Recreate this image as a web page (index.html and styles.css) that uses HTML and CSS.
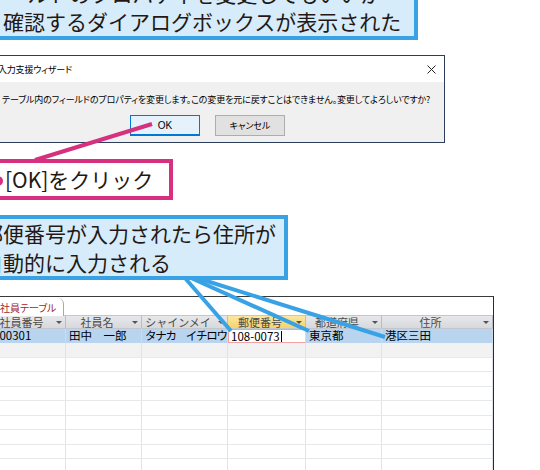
FILE: index.html
```html
<!DOCTYPE html>
<html lang="ja">
<head>
<meta charset="utf-8">
<title>入力支援ウィザード</title>
<link rel="stylesheet" href="styles.css">
</head>
<body>
<div class="page">
  <div class="note note-top">
    <div class="note-line l1">フィールドのプロパティを変更してもいいか</div>
    <div class="note-line l2">確認するダイアログボックスが表示された</div>
  </div>

  <div class="dialog">
    <div class="dlg-title">
      <span class="dlg-title-text">入力支援ウィザード</span>
      <svg class="dlg-close" width="9" height="9" viewBox="0 0 9 9"><path d="M0.5 0.5 L8.5 8.5 M8.5 0.5 L0.5 8.5" stroke="#222" stroke-width="1" fill="none"/></svg>
    </div>
    <div class="dlg-body">
      <p class="dlg-msg">テーブル内のフィールドのプロパティを変更します。この変更を元に戻すことはできません。変更してよろしいですか?</p>
      <div class="dlg-btns">
        <span class="btn btn-ok">OK</span>
        <span class="btn btn-cancel">キャンセル</span>
      </div>
    </div>
  </div>

  <div class="click-note"><span class="bullet"></span>[OK]をクリック</div>

  <div class="note note-mid">
    <div class="note-line">郵便番号が入力されたら住所が</div>
    <div class="note-line">自動的に入力される</div>
  </div>

  <div class="sheet">
    <div class="tabs"><span class="tab">社員テーブル</span></div>
    <div class="grid head">
      <div class="hcell"><span class="hlabel">社員番号</span><span class="arrow"></span></div>
      <div class="hcell"><span class="hlabel">社員名</span><span class="arrow"></span></div>
      <div class="hcell"><span class="hlabel">シャインメイ</span><span class="arrow"></span></div>
      <div class="hcell active"><span class="hlabel">郵便番号</span><span class="arrow"></span></div>
      <div class="hcell"><span class="hlabel">都道府県</span><span class="arrow"></span></div>
      <div class="hcell"><span class="hlabel">住所</span><span class="arrow"></span></div>
    </div>
    <div class="grid row selected">
      <div class="cell">100301</div>
      <div class="cell">田中　一郎</div>
      <div class="cell kana">タナカ　イチロウ</div>
      <div class="cell editing">108-0073<span class="caret"></span></div>
      <div class="cell">東京都</div>
      <div class="cell">港区三田</div>
    </div>
    <div class="grid row newrow"><div class="cell"></div><div class="cell"></div><div class="cell"></div><div class="cell"></div><div class="cell"></div><div class="cell"></div></div>
    <div class="grid row"><div class="cell"></div><div class="cell"></div><div class="cell"></div><div class="cell"></div><div class="cell"></div><div class="cell"></div></div>
    <div class="grid row"><div class="cell"></div><div class="cell"></div><div class="cell"></div><div class="cell"></div><div class="cell"></div><div class="cell"></div></div>
    <div class="grid row"><div class="cell"></div><div class="cell"></div><div class="cell"></div><div class="cell"></div><div class="cell"></div><div class="cell"></div></div>
    <div class="grid row"><div class="cell"></div><div class="cell"></div><div class="cell"></div><div class="cell"></div><div class="cell"></div><div class="cell"></div></div>
    <div class="grid row"><div class="cell"></div><div class="cell"></div><div class="cell"></div><div class="cell"></div><div class="cell"></div><div class="cell"></div></div>
    <div class="grid row"><div class="cell"></div><div class="cell"></div><div class="cell"></div><div class="cell"></div><div class="cell"></div><div class="cell"></div></div>
    <div class="grid row"><div class="cell"></div><div class="cell"></div><div class="cell"></div><div class="cell"></div><div class="cell"></div><div class="cell"></div></div>
    <div class="grid row"><div class="cell"></div><div class="cell"></div><div class="cell"></div><div class="cell"></div><div class="cell"></div><div class="cell"></div></div>
  </div>

  <svg class="overlay" width="540" height="470" viewBox="0 0 540 470">
    <line x1="35" y1="160" x2="152" y2="124" stroke="#d6307e" stroke-width="4"/>
    <g stroke="#39a2e4" stroke-width="4">
      <line x1="185" y1="278" x2="231" y2="331"/>
      <line x1="191" y1="278" x2="309" y2="331"/>
      <line x1="197" y1="278" x2="385" y2="337"/>
    </g>
  </svg>
</div>
</body>
</html>
```

FILE: styles.css
```css
* { box-sizing: border-box; margin: 0; padding: 0; }
html, body { width: 540px; height: 470px; overflow: hidden; background: #fff; }
body { font-family: "Noto Sans CJK JP", "Noto Sans", sans-serif; color: #231815; }

.page { position: relative; width: 540px; height: 470px; overflow: hidden; }

/* callouts */
.note {
  background: #d6ecfa;
  border: 4px solid #39a2e4;
  border-left: none;
  font-size: 21px;
  line-height: 28px;
  white-space: nowrap;
  overflow: hidden;
}
.note-top { width: 418px; height: 40px; border-top: none; }
.note-top .l1 { margin-top: -21px; margin-left: -35px; }
.note-top .l2 { margin-left: 3px; }

.note-mid { margin-top: 15px; width: 288px; height: 65px; line-height: 28.5px; }
.note-mid .note-line { margin-left: -18px; }

/* dialog */
.dialog {
  margin-top: 15px;
  margin-left: -20px;
  width: 465px;
  border: 1px solid #2b3e5c;
  color: #000;
  font-size: 9px;
  font-feature-settings: "palt";
}
.dlg-title {
  height: 26px;
  background: #fff;
  display: flex;
  align-items: center;
  justify-content: space-between;
  padding: 0 8px 0 17px;
}
.dlg-title-text { font-size: 9px; letter-spacing: -0.2px; }
.dlg-close { display: block; }
.dlg-body {
  height: 60px;
  background: #f0f0f0;
  padding: 12px 0 0 21px;
}
.dlg-msg { font-size: 9px; line-height: 12px; letter-spacing: -0.12px; white-space: nowrap; }
.dlg-btns { display: flex; gap: 15px; margin-top: 9px; margin-left: 128px; }
.btn {
  width: 70px;
  height: 21px;
  display: flex;
  align-items: center;
  justify-content: center;
  font-size: 9px;
  border: 1px solid #adadad;
  background: #e1e1e1;
}
.btn-ok { border-color: #0078d7; background: #e5f1fb; border-bottom-width: 2px; font-size: 10px; font-family: "Liberation Sans", sans-serif; }

/* click note */
.click-note {
  margin-top: 16px;
  width: 173px;
  height: 41px;
  border: 4px solid #d6307e;
  border-left: none;
  background: #fff;
  font-size: 21px;
  line-height: 33px;
  white-space: nowrap;
}
.bullet {
  display: inline-block;
  width: 10px;
  height: 10px;
  border-radius: 50%;
  background: #d6307e;
  margin-left: -7px;
  margin-right: 2px;
  vertical-align: 2px;
}

/* datasheet */
.sheet {
  margin-top: 16px;
  margin-left: -9px;
  width: 503px;
  height: 200px;
  border-top: 1px solid #3a3a3a;
  border-right: 1px solid #2a2a2a;
  font-size: 11.5px;
  color: #000;
}
.tabs {
  height: 19px;
  border-bottom: 1px solid #c6c6c6;
  display: flex;
  align-items: flex-end;
}
.tab {
  height: 18px;
  display: flex;
  align-items: center;
  padding: 0 7px 0 9px;
  background: #fff;
  border-right: 1px solid #a9a9a9;
  border-top-right-radius: 6px;
  color: #a4262c;
  font-size: 10px;
  font-feature-settings: "palt";
  margin-bottom: -1px;
}
.grid { display: grid; grid-template-columns: 75px 76px 86px 78px 76px 1fr; }
.head { height: 13px; background: linear-gradient(#e7e8ea, #d6d9dd); border-bottom: 1px solid #c3c7cd; }
.hcell {
  display: flex;
  align-items: center;
  border-right: 1px solid #b9bec6;
  color: #4a4a4a;
  font-size: 11px;
  line-height: 12px;
  overflow: hidden;
}
.hcell.active { background: linear-gradient(#fbe7a2, #f5d36c); }
.hlabel { flex: 1; text-align: center; white-space: nowrap; }
.arrow {
  width: 13px;
  display: flex;
  justify-content: center;
}
.arrow::before {
  content: "";
  border-left: 3px solid transparent;
  border-right: 3px solid transparent;
  border-top: 3px solid #555;
}
.row { height: 14.5px; border-bottom: 1px solid #e6e8eb; }
.row .cell { border-right: 1px solid #e0e4e9; padding-left: 3px; line-height: 13px; white-space: nowrap; overflow: hidden; }
.row.selected { height: 14px; background: #b8d4ef; border-bottom: none; }
.row.selected .cell { border-right-color: #cbdcee; }
.row.selected .cell:first-child { padding-left: 2px; }
.cell.kana { letter-spacing: -1.3px; }
.cell.editing { background: #fff; border: 1px solid #f2a2a2; padding-left: 2px; line-height: 12px; }
.caret { display: inline-block; width: 1px; height: 11px; background: #000; vertical-align: -1px; margin-left: 1px; }
.row.newrow { background: #f2f2f2; }

.overlay { position: absolute; top: 0; left: 0; pointer-events: none; }
```
